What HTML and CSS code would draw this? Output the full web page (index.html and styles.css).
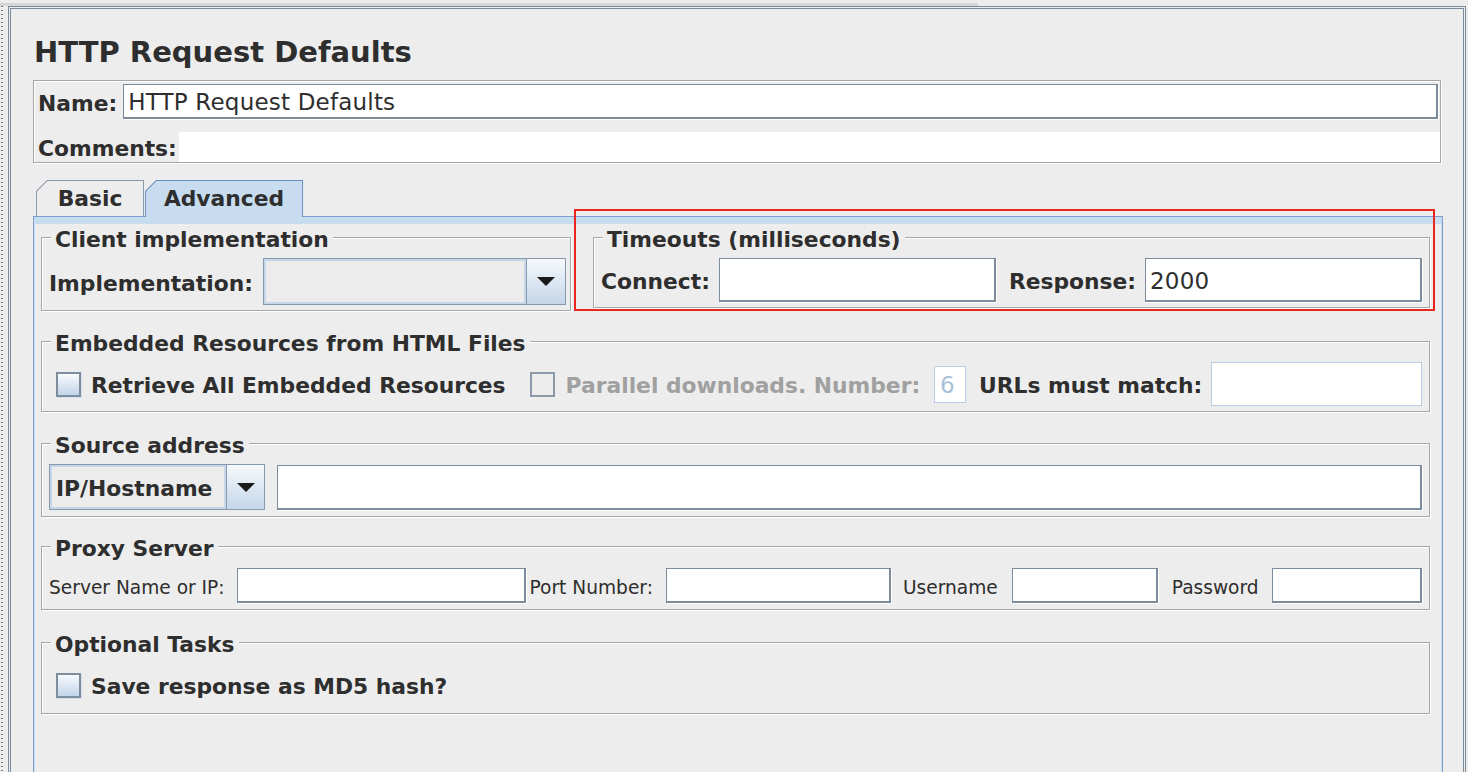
FILE: index.html
```html
<!DOCTYPE html>
<html>
<head>
  <link rel="stylesheet" href="styles.css">
</head>
<body>
  <div class="top-strip"><div class="top-band"></div></div>
  <div class="main">
    <div class="dots"></div>
    <div class="panel">
      <h1 class="title">HTTP Request Defaults</h1>

      <div class="name-box">
        <div class="name-row">
          <span class="lbl name-lbl">Name:</span>
          <div class="field name-field">HTTP Request Defaults</div>
        </div>
        <div class="comments-row">
          <span class="lbl comments-lbl">Comments:</span>
          <div class="comments-area"></div>
        </div>
      </div>

      <div class="tabs">
        <div class="tab tab-basic"><div class="tab-inner">Basic</div></div>
        <div class="tab tab-selected"><div class="tab-inner">Advanced</div></div>
      </div>

      <div class="tab-panel">
        <div class="group-row">
          <div class="group group-client">
            <div class="group-title">Client implementation</div>
            <div class="row row-client">
              <span class="lbl">Implementation:</span>
              <div class="combo combo-impl">
                <div class="combo-value"></div>
                <div class="combo-btn"><span class="arrow"></span></div>
              </div>
            </div>
          </div>

          <div class="group group-timeouts">
            <div class="group-title">Timeouts (milliseconds)</div>
            <div class="row row-timeouts">
              <span class="lbl">Connect:</span>
              <div class="field timeout-field"></div>
              <span class="lbl response-lbl">Response:</span>
              <div class="field timeout-field">2000</div>
            </div>
          </div>
        </div>

        <div class="group group-embedded">
          <div class="group-title">Embedded Resources from HTML Files</div>
          <div class="row row-embedded">
            <span class="check first-check"></span>
            <span class="lbl check-text">Retrieve All Embedded Resources</span>
            <span class="check check-disabled"></span>
            <span class="lbl check-text lbl-disabled">Parallel downloads. Number:</span>
            <div class="six-field">6</div>
            <span class="lbl urls-lbl">URLs must match:</span>
            <div class="urls-field"></div>
          </div>
        </div>

        <div class="group group-source">
          <div class="group-title">Source address</div>
          <div class="row row-source">
            <div class="combo combo-ip">
              <div class="combo-value">IP/Hostname</div>
              <div class="combo-btn"><span class="arrow"></span></div>
            </div>
            <div class="field source-field"></div>
          </div>
        </div>

        <div class="group group-proxy">
          <div class="group-title">Proxy Server</div>
          <div class="row row-proxy">
            <span class="lbl-small">Server Name or IP:</span>
            <div class="field proxy-server"></div>
            <span class="lbl-small port-lbl">Port Number:</span>
            <div class="field proxy-port"></div>
            <span class="lbl-small user-lbl">Username</span>
            <div class="field proxy-user"></div>
            <span class="lbl-small pass-lbl">Password</span>
            <div class="field proxy-pass"></div>
          </div>
        </div>

        <div class="group group-optional">
          <div class="group-title">Optional Tasks</div>
          <div class="row row-optional">
            <span class="check first-check"></span>
            <span class="lbl check-text">Save response as MD5 hash?</span>
          </div>
        </div>
      </div>
    </div>
  </div>
</body>
</html>
```
FILE: styles.css
```css
body {
  margin: 0;
  height: 100vh;
  overflow: hidden;
  background-color: #ededed;
  color: #2e2e2e;
  font-family: "DejaVu Sans", sans-serif;
}

/* bande grise en haut */
.top-strip {
  height: 6px;
  box-sizing: border-box;
  padding-top: 3px;
}

.top-band {
  width: 978px;
  height: 3px;
  background-color: #d6d6d6;
}

.main {
  display: flex;
  height: calc(100vh - 6px);
}

.dots {
  width: 2px;
  margin: 0 5px 0 1px;
  background: repeating-linear-gradient(to bottom, #6f6f6f 0 1px, #fafafa 1px 2px, transparent 2px 4px);
}

.panel {
  flex: 1;
  margin-right: 2px;
  border: 3px double #7b8b9c;
  border-bottom: none;
  padding: 0 22px;
}

.title {
  margin: 25px 0 0;
  padding-left: 1px;
  font-size: 29px;
  line-height: 36px;
  font-weight: bold;
}

/* labels */
.lbl {
  font-weight: bold;
  font-size: 21.8px;
  line-height: 26px;
  padding-top: 4px;
  white-space: nowrap;
}

.lbl-small {
  font-size: 18.6px;
  line-height: 22px;
  padding-top: 4px;
  white-space: nowrap;
}

.lbl-disabled {
  color: #a0a0a0;
}

/* champs texte */
.field {
  display: flex;
  align-items: center;
  box-sizing: border-box;
  background-color: #fff;
  border-style: solid;
  border-color: #7c8c9d;
  border-width: 1px 2px 2px 1px;
  box-shadow: 1px 1px 0 #fff;
  padding: 2px 4px 0;
  font-size: 23px;
  letter-spacing: 0.2px;
  white-space: nowrap;
}

/* cadre nom / commentaires */
.name-box {
  margin-top: 10px;
  height: 83px;
  box-sizing: border-box;
  border: 1px solid #a6a6a6;
  box-shadow: 1px 1px 0 #fff, inset 1px 1px 0 #fff;
  padding: 3px 0 0 4px;
}

.name-row {
  display: flex;
  align-items: center;
  height: 35px;
  margin-right: 2px;
}

.name-lbl {
  margin-right: 6px;
}

.name-field {
  flex: 1;
  height: 35px;
}

.comments-row {
  display: flex;
  align-items: center;
  height: 30px;
  margin-top: 13px;
}

.comments-lbl {
  margin-right: 2px;
}

.comments-area {
  flex: 1;
  align-self: stretch;
  background-color: #fff;
}

/* onglets */
.tabs {
  display: flex;
  height: 36px;
  margin-top: 17px;
  padding-left: 3px;
}

.tab {
  height: 36px;
  box-sizing: border-box;
  padding: 1px 1px 0 1px;
  background-color: #8a9aab;
  clip-path: polygon(0 11px, 11px 0, 100% 0, 100% 100%, 0 100%);
}

.tab-inner {
  height: 100%;
  background-color: #ededed;
  clip-path: polygon(0 10.5px, 10.5px 0, 100% 0, 100% 100%, 0 100%);
  text-align: center;
  font-weight: bold;
  font-size: 21.8px;
  line-height: 35px;
}

.tab-basic {
  width: 108px;
}

.tab-selected {
  position: relative;
  z-index: 1;
  width: 158px;
  height: 37px;
  margin: 0 0 -1px 1px;
  background-color: #6d8ec8;
}

.tab-selected .tab-inner {
  background-color: #c8dcf0;
}

.tab-panel {
  margin-right: -2px;
  border: 1px solid #7f9ed2;
  border-bottom: none;
  box-shadow: inset 0 7px 0 #c8dcf0, inset 1px 0 0 #c8dcf0, inset -1px 0 0 #c8dcf0;
  padding: 0 12px 80px 7px;
}

/* groupes avec titre */
.group {
  display: flex;
  flex-direction: column;
  border: 1px solid #a6a6a6;
  box-shadow: 1px 1px 0 #fff, inset 1px 1px 0 #fff;
  padding: 0 7px 5px;
}

.group-title {
  align-self: flex-start;
  margin: -11px 0 0 2px;
  padding: 0 4px;
  background-color: #ededed;
  font-weight: bold;
  font-size: 21.8px;
  line-height: 26px;
  white-space: nowrap;
}

.row {
  display: flex;
  align-items: center;
  margin-top: 5px;
}

.group-row {
  display: flex;
  align-items: flex-start;
  margin-top: 20px;
}

.group-client {
  width: 530px;
  box-sizing: border-box;
  padding-right: 4px;
}

.row-client {
  height: 47px;
}

.group-timeouts {
  position: relative;
  flex: 1;
  margin-left: 22px;
}

/* cadre rouge d'annotation */
.group-timeouts::after {
  content: "";
  position: absolute;
  top: -29px;
  left: -20px;
  right: -6px;
  bottom: -4px;
  border: 2px solid #e8281e;
}

.row-timeouts {
  height: 44px;
}

.timeout-field {
  flex: 1;
  height: 44px;
  margin-left: 9px;
}

.response-lbl {
  margin-left: 13px;
}

/* combo box */
.combo {
  display: flex;
  box-sizing: border-box;
  border: 1px solid #8799ac;
}

.combo-value {
  flex: 1;
  display: flex;
  align-items: center;
  background-color: #ececec;
  box-shadow: inset 0 0 0 2px #c6d7e9;
  font-weight: bold;
  font-size: 21.8px;
  padding: 3px 0 0 6px;
  white-space: nowrap;
}

.combo-btn {
  display: flex;
  align-items: center;
  justify-content: center;
  border-left: 1px solid #8799ac;
  background: linear-gradient(#f6f9fc, #c4d6e9);
}

.arrow {
  width: 0;
  height: 0;
  border-left: 9px solid transparent;
  border-right: 9px solid transparent;
  border-top: 9px solid #1a1a1a;
}

.combo-impl {
  height: 47px;
  margin-left: 10px;
  flex: 1;
}

.combo-impl .combo-btn {
  width: 38px;
}

.combo-ip {
  width: 216px;
  height: 46px;
}

.combo-ip .combo-btn {
  width: 37px;
}

/* cases a cocher */
.check {
  width: 25px;
  height: 25px;
  box-sizing: border-box;
  border: 2px solid #7d8d9e;
  background: linear-gradient(#f8fafd, #c2d5ea);
  box-shadow: 1px 1px 0 #d3dfec;
  flex-shrink: 0;
}

.first-check {
  margin-left: 7px;
}

.check-disabled {
  margin-left: 24px;
  border-color: #8b9aa9;
  background: none;
  box-shadow: none;
}

.check-text {
  margin-left: 10px;
}

.check-disabled + .check-text {
  margin-left: 11px;
}

.row-embedded {
  height: 44px;
}

.six-field {
  width: 32px;
  height: 37px;
  box-sizing: border-box;
  margin-left: 14px;
  border: 1px solid #b9cee6;
  background-color: #fff;
  color: #a9bfd7;
  font-size: 23px;
  line-height: 37px;
  padding-left: 5px;
}

.urls-lbl {
  margin-left: 13px;
}

.urls-field {
  flex: 1;
  height: 44px;
  margin-left: 9px;
  box-sizing: border-box;
  border: 1px solid #b9cee6;
  background-color: #fff;
}

.group-embedded {
  margin-top: 30px;
}

.group-source {
  margin-top: 31px;
  padding-bottom: 6px;
}

.row-source {
  height: 46px;
}

.source-field {
  flex: 1;
  height: 45px;
  margin-left: 12px;
}

.group-proxy {
  margin-top: 29px;
  padding-bottom: 6px;
}

.row-proxy {
  height: 35px;
  margin-top: 6px;
}

.row-proxy .field {
  height: 35px;
}

.proxy-server {
  width: 289px;
  margin-left: 12px;
}

.port-lbl {
  margin-left: 4px;
}

.proxy-port {
  width: 225px;
  margin-left: 13px;
}

.user-lbl {
  margin-left: 12px;
}

.proxy-user {
  width: 146px;
  margin-left: 14px;
}

.pass-lbl {
  margin-left: 14px;
}

.proxy-pass {
  flex: 1;
  margin-left: 13px;
}

.group-optional {
  margin-top: 32px;
  padding-bottom: 6px;
}

.row-optional {
  height: 44px;
}
```
